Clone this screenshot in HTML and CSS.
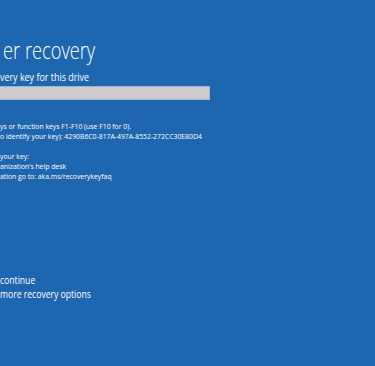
FILE: index.html
```html
<!DOCTYPE html>
<html lang="en">
<head>
<meta charset="utf-8">
<title>BitLocker recovery</title>
<link rel="stylesheet" href="styles.css">
</head>
<body>
<main class="screen">
  <h1 class="title">er recovery</h1>
  <p class="subtitle">very key for this drive</p>
  <div class="keybox"></div>
  <div class="para para-first">
    <p>ys or function keys F1-F10 (use F10 for 0).</p>
    <p>o identify your key): 4290B6C0-817A-497A-8552-272CC30E80D4</p>
  </div>
  <div class="para">
    <p>your key:</p>
    <p>anization’s help desk</p>
    <p>ation go to: aka.ms/recoverykeyfaq</p>
  </div>
  <div class="actions">
    <p>continue</p>
    <p>more recovery options</p>
  </div>
</main>
</body>
</html>
```
FILE: styles.css
```css
html, body {
  margin: 0;
  padding: 0;
  height: 100%;
  background: #1f66b0;
}
body {
  font-family: "Open Sans", "Noto Sans", sans-serif;
  color: #ffffff;
  overflow: hidden;
}
.screen {
  display: flex;
  flex-direction: column;
  padding-top: 36px;
}
.screen p, .screen h1 {
  margin: 0;
}
.title {
  font-weight: 300;
  font-size: 24px;
  line-height: 28px;
  padding-left: 4px;
  transform: scaleX(0.76);
  transform-origin: left center;
}
.subtitle {
  font-size: 10.5px;
  line-height: 14px;
  margin-top: 6px !important;
  transform: scaleX(0.85);
  transform-origin: left center;
}
.keybox {
  width: 209px;
  height: 12px;
  margin-top: 2px;
  background: #cccccc;
  border: 1px solid #9fb5cf;
  border-left: none;
}
.para {
  font-size: 6.85px;
  line-height: 10px;
}
.para-first {
  margin-top: 22px;
}
.para + .para {
  margin-top: 10px;
}
.actions {
  margin-top: 91px;
  font-size: 10.5px;
  line-height: 14px;
  transform: scaleX(0.82);
  transform-origin: left center;
}
```
